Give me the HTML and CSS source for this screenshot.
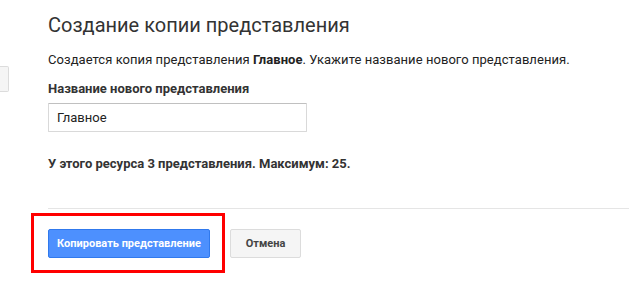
FILE: index.html
```html
<!DOCTYPE html>
<html lang="ru">
<head>
<meta charset="utf-8">
<link rel="stylesheet" href="styles.css">
</head>
<body>
<div class="page">
  <div class="side">
    <div class="stub"></div>
  </div>
  <div class="main">
    <h1 class="title">Создание копии представления</h1>
    <p class="intro">Создается копия представления <b>Главное</b>. Укажите название нового представления.</p>
    <label class="label" for="name">Название нового представления</label>
    <input class="field" id="name" type="text" value="Главное">
    <p class="count">У этого ресурса 3 представления. Максимум: 25.</p>
    <div class="divider"></div>
    <div class="actions">
      <div class="highlight">
        <button class="btn btn-primary">Копировать представление</button>
      </div>
      <button class="btn btn-default">Отмена</button>
    </div>
  </div>
</div>
</body>
</html>
```

FILE: styles.css
```css
html, body {
  margin: 0;
  padding: 0;
  background: #fff;
}
body {
  font-family: Roboto, "Liberation Sans", Arial, sans-serif;
  color: #222;
  width: 629px;
  height: 284px;
  overflow: hidden;
}
.page {
  display: flex;
}
.side {
  width: 48px;
  flex: none;
}
.stub {
  margin-top: 66px;
  width: 8px;
  height: 24px;
  background: #f5f5f5;
  border: 1px solid #dcdcdc;
  border-left: none;
  border-radius: 0 2px 2px 0;
}
.main {
  flex: 1;
}
.title {
  margin: 12px 0 0;
  font-size: 20px;
  font-weight: 400;
  line-height: 26px;
  color: #333;
}
.intro {
  margin: 14px 0 0;
  font-size: 13px;
  line-height: 16px;
  color: #222;
  letter-spacing: 0.05px;
}
.intro b {
  font-weight: 700;
}
.label {
  display: block;
  margin-top: 13px;
  font-size: 13px;
  line-height: 16px;
  font-weight: 700;
  color: #333;
}
.field {
  display: block;
  box-sizing: border-box;
  margin-top: 6px;
  width: 259px;
  height: 29px;
  padding: 0 8px;
  border: 1px solid #d9d9d9;
  border-top-color: #c0c0c0;
  border-radius: 1px;
  font-family: inherit;
  font-size: 13px;
  color: #222;
  outline: none;
}
.count {
  margin: 24px 0 0;
  font-size: 13px;
  line-height: 16px;
  font-weight: 700;
  color: #333;
}
.divider {
  margin-top: 36px;
  height: 1px;
  background: #e5e5e5;
}
.actions {
  display: flex;
  align-items: center;
  margin-left: -17px;
  margin-top: 4px;
}
.highlight {
  border: 3px solid #ff0000;
  padding: 13px 12px 12px 14px;
  display: flex;
}
.btn {
  box-sizing: border-box;
  height: 29px;
  padding: 0;
  font-family: inherit;
  font-size: 11px;
  font-weight: 700;
  border-radius: 2px;
  white-space: nowrap;
  cursor: pointer;
}
.btn-primary {
  width: 162px;
  background: #4d90fe;
  border: 1px solid #3079ed;
  color: #fff;
}
.btn-default {
  width: 71px;
  margin-left: 5px;
  background: #f5f5f5;
  border: 1px solid #dcdcdc;
  color: #444;
}
```
